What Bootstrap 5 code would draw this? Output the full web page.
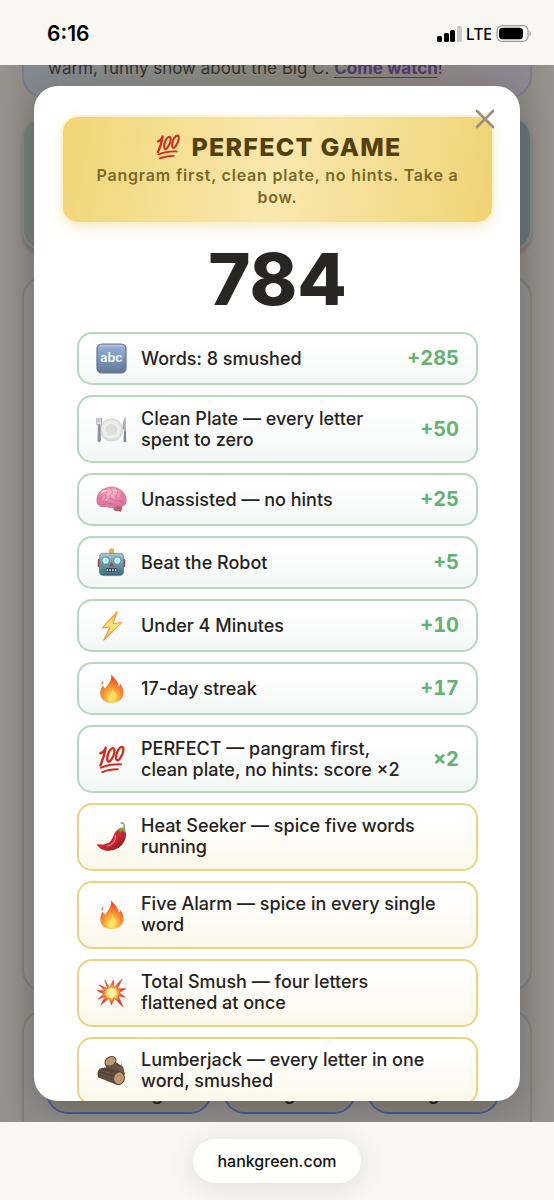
<!DOCTYPE html>
<html lang="en">
<head>
<meta charset="utf-8">
<meta name="viewport" content="width=device-width, initial-scale=1">
<title>Perfect Game</title>
<link href="https://cdn.jsdelivr.net/npm/bootstrap@5.3.0/dist/css/bootstrap.min.css" rel="stylesheet">
<style>
body { font-family: Inter, "Liberation Sans", sans-serif; background: #f8f7f2; color: #26231f; }
.status-bar { height: 65px; padding: 2px 22px 0 47px; color: #000; }
.clock { font-size: 21px; font-weight: 600; line-height: 24px; }
.carrier { font: 500 16px/20px "Noto Sans", sans-serif; }

.stage { background: linear-gradient(90deg, #98938d, #8d8983 5%, #8d8983 95%, #98948d); min-height: 0; }
.board { padding: 0 22px; gap: 18px; }
.panel { border: 2px solid #817d7a; border-radius: 22px; background: #8e8c8a; flex: none; }
.panel-intro { margin-top: -28px; padding: 18px 24px 17px; font-size: 17px; line-height: 22px; color: #37342f;
  border-color: #7b788a; background: linear-gradient(90deg, #82898f, #87877c 45%, #8b847f 75%, #8f8791); }
.panel-intro a { color: #50396f; font-weight: 700; text-underline-offset: 3px; }
.panel-hero { height: 135px; border-color: #7f8985; background: linear-gradient(90deg, #727f78, #65737d); box-shadow: 0 6px 3px #7d7672; }
.panel-game { height: 716px; margin-top: 7px; }
.panel-moves { padding: 54px 30px 0 22px; height: 200px; }
.move-row { display: grid; grid-template-columns: 5fr 4fr 4fr; gap: 11px; }
.move-btn { height: 48px; border: 2px solid #475b99; border-radius: 22px; background: #858079; color: #26231f; font-size: 18px; font-weight: 600; line-height: 22px; padding: 15px 0 7px; }

.dialog-wrap { padding: 21px 34px; z-index: 2; }
.dialog-card { background: #fff; border-radius: 24px; box-shadow: 0 8px 30px rgba(30, 25, 20, .22); overflow: hidden; }
.dialog-scroll { padding: 31px 28px 0 29px; overflow-y: auto; scrollbar-width: none; }
.dialog-scroll::-webkit-scrollbar { display: none; }
.close-btn { top: 22px; right: 24px; width: 22px; height: 22px; z-index: 3; }

.banner { padding: 14px 30px; border-radius: 15px; background: linear-gradient(100deg, #f0d575, #f9e8ae 50%, #efd374);
  box-shadow: 0 0 0 2px rgba(253, 240, 200, .7), 0 4px 14px rgba(236, 196, 90, .4); }
.banner h1 { font-size: 25px; font-weight: 800; line-height: 32px; letter-spacing: .05em; color: #54400f; gap: 10px; }
.banner p { font-size: 16px; font-weight: 600; line-height: 22px; letter-spacing: .05em; color: #7d6728; padding-top: 1px; }
.score { font-size: 72px; font-weight: 800; line-height: 72px; margin: 21px 0 17px; color: #292622; }

.awards { padding: 0 14px; gap: 10px; }
.award { border: 2px solid #b3d8bb; border-radius: 15px; padding: 11px 17px; gap: 14px; background: linear-gradient(#fff 20%, #f2f8f5);
  font-size: 18px; font-weight: 500; line-height: 21px; flex: none; }
.award svg { width: 31px; height: 31px; margin: -2px 0; flex: none; }
.award-gold { border-color: #ecd283; background: linear-gradient(#fff 20%, #fcf7e9); padding: 10px 31px 12px 17px; }
.points { font-size: 20px; font-weight: 700; color: #66b174; font-variant-numeric: tabular-nums; }

.address-bar { height: 78px; }
.address-pill { border: 0; border-radius: 22px; padding: 0 24px; height: 44px; background: #fffffc; color: #111; font-size: 16px; font-weight: 500; box-shadow: 0 4px 26px rgba(60, 50, 40, .12); }
</style>
</head>
<body>

<svg width="0" height="0" class="position-absolute" aria-hidden="true">
  <defs>
    <linearGradient id="g-abc" x2="0" y2="1"><stop stop-color="#9bb6d6"/><stop offset=".4" stop-color="#7f9bbf"/><stop offset="1" stop-color="#627896"/></linearGradient>
    <linearGradient id="g-bot" x2="0" y2="1"><stop stop-color="#a7c8cf"/><stop offset="1" stop-color="#3c6878"/></linearGradient>
    <radialGradient id="g-brain" cx=".45" cy=".3"><stop stop-color="#ffb9d2"/><stop offset="1" stop-color="#e0789f"/></radialGradient>
    <linearGradient id="g-bolt" x2="0" y2="1"><stop stop-color="#f7a83a"/><stop offset=".5" stop-color="#ffe98a"/><stop offset="1" stop-color="#f0a03a"/></linearGradient>
    <radialGradient id="g-fire" cx=".5" cy=".85" r=".8"><stop stop-color="#ffe860"/><stop offset=".35" stop-color="#fdb03c"/><stop offset=".8" stop-color="#ee5c2c"/><stop offset="1" stop-color="#e04a2a"/></radialGradient>
    <linearGradient id="g-chili" x2="1" y2="1"><stop stop-color="#e5575a"/><stop offset=".5" stop-color="#c92c33"/><stop offset="1" stop-color="#80151d"/></linearGradient>
    <radialGradient id="g-boom"><stop stop-color="#fffbd0"/><stop offset=".3" stop-color="#ffe25e"/><stop offset=".5" stop-color="#f58a3d"/><stop offset=".8" stop-color="#e0372c"/></radialGradient>
  </defs>
  <symbol id="i-hundred" viewBox="0 0 32 32">
    <g fill="none" stroke="#cc2f20" stroke-linecap="round" stroke-linejoin="round">
      <path d="M4.500 9.500C7 9 8.500 7.500 10 4C9 10 7.300 16 4.500 22" stroke-width="2.600"/>
      <path d="M17.500 4.200C14 4.500 10.700 13 11.800 17C13.200 21.500 18.500 13.500 19 8C19.200 5.500 18.700 4.200 17.500 4.200Z" stroke-width="2.400"/>
      <path d="M26.800 3C23 3.400 19.800 11.500 20.800 15.500C22.200 20 27.500 12.500 28.300 6.500C28.500 4.300 28 3 26.800 3Z" stroke-width="2.400"/>
      <path d="M5 24.500C11 22 18 20.800 26 21" stroke-width="2"/>
      <path d="M6.500 29C11 27 15.500 26 22.500 26" stroke-width="2"/>
    </g>
  </symbol>
  <symbol id="i-abc" viewBox="0 0 32 32">
    <rect x="1" y="1" width="30" height="30" rx="5" fill="url(#g-abc)" stroke="#66768e" stroke-width="1.200"/>
    <path d="M4 3H28" stroke="#c5d6ea" stroke-linecap="round"/>
    <text x="16" y="20" text-anchor="middle" font-family="Inter, sans-serif" font-size="13" font-weight="600" fill="#fff">abc</text>
  </symbol>
  <symbol id="i-plate" viewBox="0 0 32 32">
    <circle cx="16" cy="16.500" r="11.500" fill="#dcdcdb" stroke="#c9c9c8" stroke-width=".6"/>
    <circle cx="16" cy="16" r="10" fill="#ebebea"/><circle cx="16" cy="16.300" r="7" fill="#dfdfde" stroke="#f8f8f8"/>
    <path d="M.8 4V9Q.8 11.500 2.300 12L2 28Q3.300 30 4.500 28L4.200 12Q5.700 11.500 5.700 9V4M2.400 4V9M4.100 4V9" fill="none" stroke="#9da4ad" stroke-width="1"/>
    <path d="M2.300 10H4.200L4.700 28Q3.300 30 2 28Z" fill="#8992a0"/>
    <path d="M30.500 3Q27.200 6 27.500 16H29L28.500 28Q30 30 31.200 28Z" fill="#a5abb4"/><path d="M29 18L28.600 28Q30 30 31.200 28L30.800 18Z" fill="#7c8594"/>
  </symbol>
  <symbol id="i-brain" viewBox="0 0 32 32">
    <path d="M20 22L25 29Q27 27 26 22Z" fill="#ab5163"/>
    <ellipse cx="22.500" cy="25" rx="4.500" ry="3" fill="#b9606c"/>
    <path d="M1 18C.5 12 4 6 10 4.500C15 2 21 3 25 6C30 9 32 14 31 19C30 23 26 24 22 22.500C18 26 13 24 11 23C6 24.500 1.500 23 1 18Z" fill="url(#g-brain)" stroke="#c76488" stroke-width=".7"/>
    <g fill="none" stroke="#c96b90" stroke-width=".8" stroke-linecap="round"><path d="M10 5Q13 9 9 11Q5 12 4 16M15 4Q19 7 16 10Q13 12 15 15M21 5Q24 9 21 11Q19 13 22 15M27 9Q24 12 27 15M7 19Q12 18 14 15Q18 17 22 17Q27 17 29 20M4 20Q7 23 11 20Q16 20 19 21M10 11Q12 14 9 16M27 17Q28 19 25 21"/></g>
    <path d="M6 9Q8 6 11 7M17 7Q20 6 22 8M10 17L12 16" stroke="#ffdae6" stroke-width="1.200" fill="none"/>
  </symbol>
  <symbol id="i-robot" viewBox="0 0 32 32">
    <rect x="14" y="4" width="4" height="5" fill="#a7863c"/><circle cx="16" cy="4" r="2.700" fill="#f2aa43"/>
    <rect x="1.800" y="12" width="5" height="9" rx="1.500" fill="#aa4943"/><rect x="25.200" y="12" width="5" height="9" rx="1.500" fill="#aa4943"/>
    <path d="M7 6.500H25Q28.500 6.500 28.500 10V25Q28.500 29.500 24 29.500H8Q3.500 29.500 3.500 25V10Q3.500 6.500 7 6.500Z" fill="url(#g-bot)" stroke="#4a7280" stroke-width=".6"/>
    <circle cx="10" cy="14" r="4.300" fill="#4b94a7"/><circle cx="22" cy="14" r="4.300" fill="#4b94a7"/>
    <circle cx="10" cy="14" r="3.200" fill="#d9ffff"/><circle cx="22" cy="14" r="3.200" fill="#d9ffff"/><circle cx="10" cy="14" r="1.200" fill="#9edce5"/><circle cx="22" cy="14" r="1.200" fill="#9edce5"/>
    <path d="M16 15L18.500 20H13.500Z" fill="#9c4b50"/><rect x="10" y="22" width="12" height="3.800" rx="1.500" fill="#233f4b"/><path d="M11.700 22.800V25M14.500 22.800V25M17.500 22.800V25M20.300 22.800V25" stroke="#e5edf0" stroke-width="1.400"/>
  </symbol>
  <symbol id="i-bolt" viewBox="0 0 32 32"><path d="M22 1.500L6.500 18.500L14.500 17.500L8 31L26.500 13L17.500 14Z" fill="url(#g-bolt)" stroke="#e9a23b" stroke-width="1.100" stroke-linejoin="round"/></symbol>
  <symbol id="i-fire" viewBox="0 0 32 32">
    <path d="M15.500 1C18 5 23 8 23.500 14Q25 13 25 11C28 15 29 19 28 23C27 28 22 31 16 31C10 31 5 28 4.500 22C4 18 6 16 6.500 13Q8 15 9.500 16C12 12 17 8 15.500 1Z" fill="url(#g-fire)"/>
    <path d="M7.500 8Q5 10 5.500 12Q8 11 7.500 8Z" fill="#ed5e35"/>
    <path d="M17 15Q18 20 21 22Q22 27 16.500 30Q10 28 11.500 22Q13 23 13.500 24Q17 20 17 15Z" fill="#ffe36a" opacity=".7"/>
  </symbol>
  <symbol id="i-chili" viewBox="0 0 32 32">
    <path d="M26 2Q29 1.500 29 5V8" fill="none" stroke="#789b50" stroke-width="1.500" stroke-linecap="round"/>
    <path d="M21 10C17 14 18 20 12 23C8 25 4 24 .5 24C4 30 11 32 18 30C26 28 31 21 31 14C31 8 25 6 21 10Z" fill="url(#g-chili)"/>
    <path d="M21.500 10Q25 4 30.500 9L30 12L27 9.500L25 12L24 9.500Z" fill="#7f9d51"/>
    <path d="M20 15Q21 23 12 26" fill="none" stroke="#ef8988" stroke-width="1.200" stroke-linecap="round"/>
  </symbol>
  <symbol id="i-boom" viewBox="0 0 32 32">
    <path d="M9 3L14 11L18 3L18.500 11L27 2L22 12L31 12L24 16L30 21L23 19.500L28 31L19 22L16 29L13.500 22L5 29L9.500 20L2 23L8 17.500L1 14L9 14L3 8L12 12Z" fill="url(#g-boom)" stroke="#d74536" stroke-width=".6"/>
    <path d="M16 10L17.500 13.500L21 12L19.500 16L22 18L18.500 18.500L16 22L14 18.500L10 18L13 15.500L12 12L14.500 13.500Z" fill="#fff3a8"/>
  </symbol>
  <symbol id="i-wood" viewBox="0 0 32 32">
    <path d="M10 11L14 3L28 12L30 20L22 22Z" fill="#665144"/><path d="M27 6L26 12L30 20L24 16Z" fill="#715d50"/>
    <path d="M10 9L20 7L22 16L10 15Z" fill="#665144"/>
    <ellipse cx="15" cy="6.500" rx="6" ry="4.500" transform="rotate(-30 15 6.500)" fill="#bb9a72" stroke="#5c473a"/>
    <path d="M4 14Q.5 17 2 23L22 31Q29 30 29 22Q29 18 25 17L9 13Z" fill="#574539"/>
    <path d="M5 16L19 20M4 19L18 24M4 22L18 27M18 10L26 15" stroke="#75604f" stroke-width=".8"/>
    <ellipse cx="23.800" cy="24" rx="5.500" ry="6.500" transform="rotate(12 23.800 24)" fill="#c39b74" stroke="#5d473a"/><ellipse cx="23.800" cy="24" rx="2.500" ry="3.300" fill="none" stroke="#a47b57" stroke-width=".7"/>
  </symbol>
</svg>

<div class="vh-100 d-flex flex-column overflow-hidden">
  <header class="status-bar d-flex align-items-center justify-content-between flex-shrink-0">
    <span class="clock">6:16</span>
    <div class="d-flex align-items-center gap-1">
      <svg width="25" height="16" viewBox="0 0 25 16" aria-label="Signal"><rect x="0" y="10" width="5" height="6" rx="1.500"/><rect x="7" y="7" width="5" height="9" rx="1.500"/><rect x="13" y="4" width="5" height="12" rx="1.500"/><rect x="20" y="0" width="5" height="16" rx="1.500" fill="#c9c8c4"/></svg>
      <span class="carrier">LTE</span>
      <svg width="36" height="17" viewBox="0 0 36 17" aria-label="Battery"><rect x="1" y=".7" width="31" height="15.600" rx="5" fill="none" stroke="#989894" stroke-width="1.200"/><rect x="3" y="2.700" width="24" height="11.600" rx="3.500"/><path d="M33.500 5.500Q36 8.500 33.500 11.500Z" fill="#989894"/></svg>
    </div>
  </header>

  <main class="stage flex-grow-1 position-relative overflow-hidden">
    <div class="board position-absolute top-0 start-0 w-100 h-100 d-flex flex-column overflow-hidden">
      <section class="panel panel-intro">warm, funny show about the Big C. <a href="#watch">Come watch</a>!</section>
      <section class="panel panel-hero"></section>
      <section class="panel panel-game"></section>
      <section class="panel panel-moves">
        <div class="move-row">
          <button class="move-btn" type="button">Missing</button>
          <button class="move-btn" type="button">g</button>
          <button class="move-btn" type="button">g</button>
        </div>
      </section>
    </div>

    <div class="dialog-wrap position-relative h-100">
      <div class="dialog-card position-relative h-100 d-flex flex-column" role="dialog" aria-labelledby="result-title">
        <button class="close-btn position-absolute btn p-0 border-0 d-flex" type="button" aria-label="Close">
          <svg width="22" height="22" viewBox="0 0 22 22"><path d="M3 3L19 19M19 3L3 19" stroke="#998f7b" stroke-width="2.600" stroke-linecap="round"/></svg>
        </button>
        <div class="dialog-scroll h-100">
          <div class="banner text-center">
            <h1 id="result-title" class="d-flex align-items-center justify-content-center mb-0"><svg width="28" height="28"><use href="#i-hundred"/></svg>PERFECT GAME</h1>
            <p class="mb-0">Pangram first, clean plate, no hints. Take a bow.</p>
          </div>
          <div class="score text-center">784</div>
          <ul class="awards list-unstyled d-flex flex-column mb-4">
            <li class="award d-flex align-items-center"><svg><use href="#i-abc"/></svg><span class="flex-grow-1">Words: 8 smushed</span><span class="points">+285</span></li>
            <li class="award d-flex align-items-center"><svg><use href="#i-plate"/></svg><span class="flex-grow-1">Clean Plate — every letter spent to zero</span><span class="points">+50</span></li>
            <li class="award d-flex align-items-center"><svg><use href="#i-brain"/></svg><span class="flex-grow-1">Unassisted — no hints</span><span class="points">+25</span></li>
            <li class="award d-flex align-items-center"><svg><use href="#i-robot"/></svg><span class="flex-grow-1">Beat the Robot</span><span class="points">+5</span></li>
            <li class="award d-flex align-items-center"><svg><use href="#i-bolt"/></svg><span class="flex-grow-1">Under 4 Minutes</span><span class="points">+10</span></li>
            <li class="award d-flex align-items-center"><svg><use href="#i-fire"/></svg><span class="flex-grow-1">17-day streak</span><span class="points">+17</span></li>
            <li class="award d-flex align-items-center"><svg><use href="#i-hundred"/></svg><span class="flex-grow-1">PERFECT — pangram first, clean plate, no hints: score ×2</span><span class="points">×2</span></li>
            <li class="award award-gold d-flex align-items-center"><svg><use href="#i-chili"/></svg><span class="flex-grow-1">Heat Seeker — spice five words running</span></li>
            <li class="award award-gold d-flex align-items-center"><svg><use href="#i-fire"/></svg><span class="flex-grow-1">Five Alarm — spice in every single word</span></li>
            <li class="award award-gold d-flex align-items-center"><svg><use href="#i-boom"/></svg><span class="flex-grow-1">Total Smush — four letters flattened at once</span></li>
            <li class="award award-gold d-flex align-items-center"><svg><use href="#i-wood"/></svg><span class="flex-grow-1">Lumberjack — every letter in one word, smushed</span></li>
          </ul>
        </div>
      </div>
    </div>
  </main>

  <footer class="address-bar d-flex align-items-center justify-content-center flex-shrink-0">
    <button class="address-pill" type="button">hankgreen.com</button>
  </footer>
</div>
<script src="https://cdn.jsdelivr.net/npm/bootstrap@5.3.0/dist/js/bootstrap.bundle.min.js"></script>
</body>
</html>
